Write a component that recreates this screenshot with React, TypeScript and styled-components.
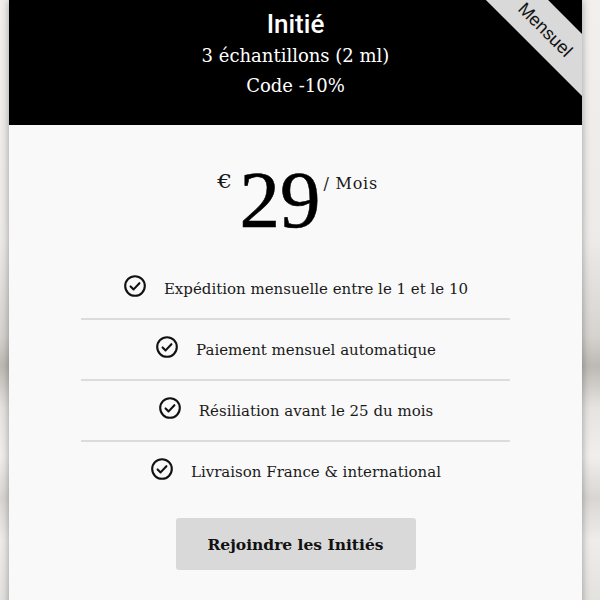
import styled, { createGlobalStyle } from 'styled-components';

const GlobalStyle = createGlobalStyle`
  html, body {
    margin: 0;
    padding: 0;
  }
  body {
    height: 600px;
    overflow: hidden;
    background: linear-gradient(
      180deg,
      #f1f0ef 0%,
      #ecebea 40%,
      #d6d3cf 56%,
      #bdb9b4 61%,
      #e6e4e1 68%,
      #f0efee 76%,
      #d9d6d2 83%,
      #eeedec 90%,
      #e4e2df 100%
    );
    font-family: 'DejaVu Serif', serif;
  }
`;

const Page = styled.div`
  padding-left: 9px;
`;

const Card = styled.div`
  width: 573px;
  background-color: #f9f9f9;
  box-shadow: 0 0 8px rgba(0, 0, 0, 0.35);
`;

const Header = styled.div`
  position: relative;
  overflow: hidden;
  height: 125px;
  box-sizing: border-box;
  padding-top: 9px;
  background-color: #000;
  color: #fff;
  text-align: center;
`;

const PlanName = styled.div`
  font-family: Roboto, 'Liberation Sans', sans-serif;
  font-weight: 500;
  font-size: 26px;
  line-height: 30px;
  margin-bottom: 2px;
`;

const PlanLine = styled.div`
  font-family: 'DejaVu Serif', serif;
  font-size: 18px;
  line-height: 30px;
`;

const Ribbon = styled.div`
  position: absolute;
  left: 437px;
  top: 7px;
  width: 200px;
  height: 44px;
  display: flex;
  align-items: center;
  justify-content: center;
  background-color: #d9d9d9;
  transform: rotate(45deg);
`;

const RibbonLabel = styled.span`
  color: #111;
  font-family: 'Liberation Sans', Arial, sans-serif;
  font-size: 18px;
  line-height: 18px;
  margin-top: 2px;
`;

const Body = styled.div`
  padding: 35px 0 40px;
  display: flex;
  flex-direction: column;
  align-items: center;
  color: #1a1a1a;
`;

const Price = styled.div`
  display: flex;
  align-items: flex-start;
  justify-content: center;
  height: 78px;
  padding-left: 6px;
`;

const Currency = styled.span`
  font-family: 'DejaVu Serif', serif;
  font-size: 18px;
  line-height: 18px;
  margin-top: 13px;
  margin-right: 9px;
  transform: scaleX(1.3);
`;

const Amount = styled.span`
  font-family: 'Liberation Serif', serif;
  font-size: 81px;
  line-height: 80px;
  color: #000;
  -webkit-text-stroke: 0.6px #000;
`;

const Period = styled.span`
  font-family: 'DejaVu Serif', serif;
  font-size: 16px;
  line-height: 16px;
  letter-spacing: 0.8px;
  margin-top: 16px;
  margin-left: 3px;
`;

const Features = styled.ul`
  list-style: none;
  margin: 21px 0 0;
  padding: 0;
  width: 429px;
`;

const Feature = styled.li`
  height: 59px;
  display: flex;
  align-items: center;
  justify-content: center;
  gap: 17px;
  font-size: 15px;
  border-bottom: 2px solid #dcdcdc;

  &:last-child {
    border-bottom: none;
  }

  svg {
    flex-shrink: 0;
    margin-top: -6px;
  }
`;

const JoinButton = styled.button`
  margin-top: 17px;
  width: 240px;
  height: 52px;
  border: none;
  border-radius: 3px;
  background-color: #d9d9d9;
  color: #111;
  font-family: 'DejaVu Serif', serif;
  font-weight: bold;
  font-size: 15.5px;
  cursor: pointer;
`;

function CheckIcon() {
  return (
    <svg width="24" height="24" viewBox="0 0 24 24" fill="none">
      <circle cx="12" cy="12" r="9.8" stroke="#111" strokeWidth="2.1" />
      <path
        d="M7.6 12.4l3 3 5.8-6.2"
        stroke="#111"
        strokeWidth="2.1"
        strokeLinecap="round"
        strokeLinejoin="round"
      />
    </svg>
  );
}

const features = [
  'Expédition mensuelle entre le 1 et le 10',
  'Paiement mensuel automatique',
  'Résiliation avant le 25 du mois',
  'Livraison France & international',
];

function App() {
  return (
    <>
      <GlobalStyle />
      <Page>
        <Card>
          <Header>
            <PlanName>Initié</PlanName>
            <PlanLine>3 échantillons (2 ml)</PlanLine>
            <PlanLine>Code -10%</PlanLine>
            <Ribbon>
              <RibbonLabel>Mensuel</RibbonLabel>
            </Ribbon>
          </Header>
          <Body>
            <Price>
              <Currency>€</Currency>
              <Amount>29</Amount>
              <Period>/ Mois</Period>
            </Price>
            <Features>
              {features.map((f) => (
                <Feature key={f}>
                  <CheckIcon />
                  <span>{f}</span>
                </Feature>
              ))}
            </Features>
            <JoinButton>Rejoindre les Initiés</JoinButton>
          </Body>
        </Card>
      </Page>
    </>
  );
}

export default App;
